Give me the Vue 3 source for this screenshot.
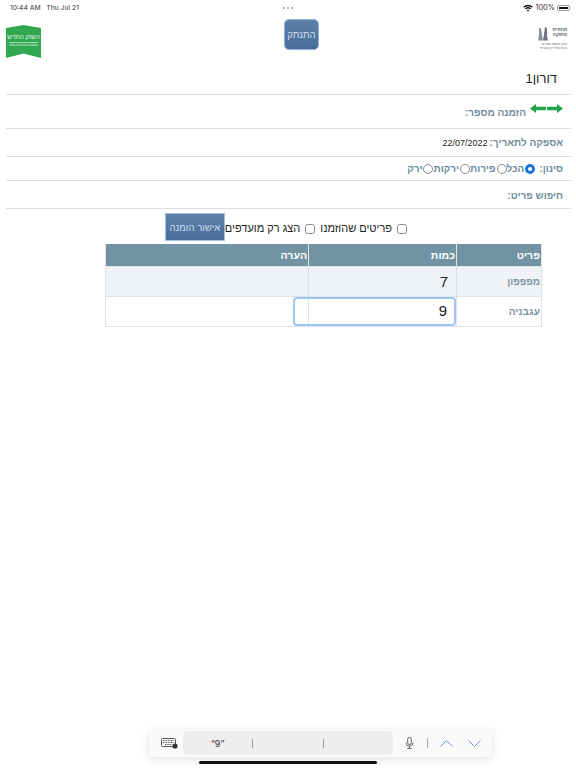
<script setup>
const rows = [
  { name: 'מפפפון', qty: '7', note: '' },
  { name: 'עגבניה', qty: '9', note: '', focused: true }
]

const filters = [
  { label: 'הכל', checked: true },
  { label: 'פירות', checked: false },
  { label: 'ירקות', checked: false },
  { label: 'ירק', checked: false }
]
</script>

<template>
  <div class="screen" dir="rtl">
    <div class="status" dir="ltr">
      <span class="status-left">10:44 AM&nbsp;&nbsp; Thu Jul 21</span>
      <span class="dots"><i></i><i></i><i></i></span>
      <span class="status-right">
        <svg width="10" height="8" viewBox="0 0 10 8">
          <path d="M0.3 2.7a6.8 6.8 0 0 1 9.4 0l-.9 1a5.4 5.4 0 0 0-7.6 0z" fill="#111" />
          <path d="M2 4.5a4.4 4.4 0 0 1 6 0l-.9 1a3 3 0 0 0-4.2 0z" fill="#111" />
          <path d="M3.7 6.2a2 2 0 0 1 2.6 0L5 7.6z" fill="#111" />
        </svg>
        <span class="percent">100%</span>
        <span class="battery"><span class="battery-fill"></span></span>
      </span>
    </div>

    <header class="top">
      <div class="logo-right">
        <svg class="logo-figure" width="12" height="17" viewBox="0 0 12 16">
          <path d="M2 1l2 1 1 7 1 5H1l1-5z" fill="#8a8f94" />
          <path d="M8 0l2 2v7l1 5H6l1-6z" fill="#70767c" />
        </svg>
        <div class="logo-right-name">תחתית<br />מתוקה</div>
        <div class="logo-right-sub">שיווק והפצת מוצרים<br />בע"מ מהדרין בכשרות</div>
      </div>
      <button class="btn btn-logout">התנתק</button>
      <div class="logo-green">
        <svg class="logo-shape" width="35" height="33" viewBox="0 0 35 33">
          <path d="M0 3 L17.5 0 L35 3 V33 L17.5 28.5 L0 33 Z" fill="#2fa84f" />
        </svg>
        <div class="logo-title">השוק החדש</div>
        <div class="logo-sub">הטעמים הטובים של הטבע</div>
      </div>
    </header>

    <div class="title-row">דורון1</div>

    <div class="row row-order">
      <span class="arrows">
        <svg width="33" height="9" viewBox="0 0 33 9">
          <path d="M0 4.5L6 0v2.7h10v3.6H6V9z" fill="#22a54a" />
          <path d="M33 4.5L27 0v2.7H17v3.6h10V9z" fill="#22a54a" />
        </svg>
      </span>
      <span class="label">הזמנה מספר:</span>
    </div>

    <div class="row row-date">
      <span class="label">אספקה לתאריך:</span>
      <span class="date" dir="ltr">22/07/2022</span>
    </div>

    <div class="row row-filter">
      <span class="label filter-label">סינון:</span>
      <label v-for="f in filters" :key="f.label" class="radio-item">
        <span class="radio" :class="{ on: f.checked }"></span>
        <span class="label">{{ f.label }}</span>
      </label>
    </div>

    <div class="row row-search">
      <span class="label">חיפוש פריט:</span>
    </div>

    <div class="options">
      <span class="box"></span>
      <span class="option-text">פריטים שהוזמנו</span>
      <span class="box"></span>
      <span class="option-text">הצג רק מועדפים</span>
      <button class="btn btn-confirm">אישור הזמנה</button>
    </div>

    <table class="grid">
      <colgroup>
        <col class="c-item" />
        <col class="c-qty" />
        <col />
      </colgroup>
      <thead>
        <tr>
          <th>פריט</th>
          <th>כמות</th>
          <th>הערה</th>
        </tr>
      </thead>
      <tbody>
        <tr v-for="(r, idx) in rows" :key="idx" :class="{ odd: idx % 2 === 0 }">
          <td class="name">{{ r.name }}</td>
          <td class="qty">
            <div class="qty-value" :class="{ focused: r.focused }">{{ r.qty }}</div>
          </td>
          <td>{{ r.note }}</td>
        </tr>
      </tbody>
    </table>

    <div class="accessory" dir="ltr">
      <svg class="kb" width="17" height="11" viewBox="0 0 17 11">
        <rect x="0.5" y="0.5" width="14" height="8" rx="1" fill="none" stroke="#555" />
        <path d="M2 2.5h11M2 4.5h11M4 6.5h7" stroke="#555" stroke-width="1" stroke-dasharray="1 .6" />
        <circle cx="14" cy="8" r="2.6" fill="#333" />
      </svg>
      <div class="suggest">
        <span class="word">“9”</span>
        <span class="sep"></span>
        <span class="word"></span>
        <span class="sep"></span>
        <span class="word"></span>
      </div>
      <svg class="mic" width="9" height="14" viewBox="0 0 10 14">
        <rect x="3" y="0.7" width="4" height="8" rx="2" fill="none" stroke="#555" />
        <path d="M1 6.5a4 4 0 0 0 8 0M5 10.5v2M2.5 13h5" fill="none" stroke="#555" />
      </svg>
      <span class="bar"></span>
      <svg class="chev" width="13" height="7" viewBox="0 0 13 7">
        <path d="M.5 6.5l6-6 6 6" fill="none" stroke="#6f8fdf" />
      </svg>
      <svg class="chev" width="13" height="7" viewBox="0 0 13 7">
        <path d="M.5 .5l6 6 6-6" fill="none" stroke="#6f8fdf" />
      </svg>
    </div>
    <div class="home"></div>
  </div>
</template>

<style>
html, body {
  margin: 0;
  background: #fff;
}
</style>

<style scoped>
.screen {
  position: relative;
  width: 576px;
  height: 768px;
  overflow: hidden;
  background: #fff;
  font-family: "Liberation Sans", Arial, sans-serif;
  color: #222;
}

.status {
  display: flex;
  justify-content: space-between;
  align-items: center;
  height: 14px;
  padding: 1px 6px 0 10px;
  box-sizing: border-box;
  font-family: Inter, sans-serif;
  font-size: 6.8px;
  color: #333;
}

.dots {
  display: flex;
  gap: 2px;
  margin-right: 26px;
}

.dots i {
  width: 2px;
  height: 2px;
  border-radius: 50%;
  background: #999;
}

.status-right {
  display: flex;
  align-items: center;
  gap: 2px;
}

.percent {
  font-size: 7.4px;
}

.battery {
  display: block;
  width: 13px;
  height: 6px;
  padding: 1px;
  border: 0.5px solid #999;
  border-radius: 2px;
  box-sizing: border-box;
}

.battery-fill {
  display: block;
  height: 100%;
  background: #111;
}

.top {
  display: flex;
  justify-content: space-between;
  align-items: flex-start;
  height: 47px;
  padding: 5px 9px 0 6px;
}

.logo-right {
  position: relative;
  width: 30px;
  height: 26px;
  margin-top: 7px;
  color: #666;
}

.logo-figure {
  position: absolute;
  top: 0;
  right: 18px;
}

.logo-right-name {
  width: 18px;
  padding-top: 1px;
  font-size: 4.6px;
  line-height: 5px;
  font-weight: bold;
  color: #555;
}

.logo-right-sub {
  margin-top: 5px;
  font-size: 3px;
  line-height: 4px;
  white-space: nowrap;
}

.btn {
  border: 1px solid #8fb0d8;
  color: #d0dfec;
  font-family: "Liberation Sans", Arial, sans-serif;
  font-size: 9.5px;
  padding: 0;
  background: linear-gradient(#5b82ab, #4a6c9a);
}

.btn-logout {
  width: 35px;
  height: 31px;
  border-radius: 5px;
  margin-left: 25px;
}

.logo-green {
  position: relative;
  width: 35px;
  height: 33px;
  margin-top: 6px;
  color: #fff;
  text-align: center;
}

.logo-shape {
  position: absolute;
  top: 0;
  left: 0;
}

.logo-title {
  position: relative;
  padding-top: 7px;
  font-size: 6.4px;
  line-height: 9px;
  white-space: nowrap;
  color: #e4f5e8;
}

.logo-sub {
  position: relative;
  margin: 1px 3px 0;
  padding-top: 1px;
  border-top: 0.5px solid #a9dfb8;
  font-size: 2.6px;
  line-height: 4px;
  white-space: nowrap;
}

.title-row {
  height: 28px;
  margin: 0 5px 0 6px;
  padding-right: 14px;
  border-bottom: 1px solid #ddd;
  font-size: 13px;
  line-height: 26px;
  color: #222;
}

.row {
  display: flex;
  align-items: center;
  margin: 0 5px 0 6px;
  border-bottom: 1px solid #ddd;
  box-sizing: border-box;
}

.label {
  color: #6e8c9c;
  font-size: 10px;
  font-weight: bold;
}

.row-order {
  height: 34px;
  padding-right: 8px;
  align-items: flex-start;
}

.row-order .arrows {
  padding-top: 9px;
  margin-left: 4px;
}

.row-order .label {
  padding-top: 12px;
}

.arrows {
  display: block;
  line-height: 0;
}

.row-date {
  height: 28px;
  padding-right: 8px;
  gap: 2px;
}

.date {
  font-size: 9px;
  color: #222;
}

.row-filter {
  height: 24px;
  padding-right: 8px;
}

.filter-label {
  margin-left: 4px;
}

.radio-item {
  display: flex;
  align-items: center;
  gap: 1px;
}

.radio {
  display: block;
  width: 10px;
  height: 10px;
  border: 1px solid #8a8a8a;
  border-radius: 50%;
  box-sizing: border-box;
}

.radio.on {
  border: 3px solid #1a73e0;
  background: #fff;
}

.row-search {
  height: 28px;
  padding-right: 8px;
}

.row-search .label {
  padding-top: 2px;
}

.options {
  display: flex;
  align-items: center;
  height: 34px;
  padding-top: 2px;
  padding-right: 169px;
  gap: 5px;
  box-sizing: border-box;
  font-size: 11px;
  color: #222;
}

.box {
  display: block;
  width: 10px;
  height: 10px;
  border: 1px solid #8a8a8a;
  border-radius: 2.5px;
  box-sizing: border-box;
  margin-top: 4px;
}

.option-text {
  margin-top: 2px;
}

.btn-confirm {
  width: 60px;
  height: 28px;
  margin-right: -5px;
  border: 1px solid #a6bfe0;
}

.grid {
  width: 437px;
  margin-right: 34px;
  margin-top: 1px;
  border-collapse: collapse;
  table-layout: fixed;
}

.c-item {
  width: 85px;
}

.c-qty {
  width: 148px;
}

.grid th {
  height: 22px;
  padding: 0 1px 0 0;
  background: #7193a3;
  color: #fff;
  font-size: 10.5px;
  font-weight: bold;
  text-align: right;
  border: 1px solid #dfe6ea;
  border-top: none;
}

.grid td {
  height: 29px;
  padding: 0;
  border: 1px solid #e0e3e5;
  font-size: 10px;
}

.grid tr.odd td {
  background: #eff3f5;
}

.name {
  padding-right: 1px !important;
  color: #7a96a4;
  font-weight: bold;
}

.qty {
  position: relative;
}

.qty-value {
  font-size: 15px;
  color: #222;
  text-align: right;
  padding-right: 8px;
  line-height: 26px;
}

.qty-value.focused {
  width: 152px;
  padding-right: 7px;
  height: 25px;
  border: 2px solid #9cc6f3;
  border-radius: 4px;
  line-height: 24px;
}

.accessory {
  position: absolute;
  left: 149px;
  top: 729px;
  width: 343px;
  height: 28px;
  display: flex;
  align-items: center;
  box-sizing: border-box;
  padding-left: 12px;
  background: #fafafa;
  border-radius: 5px;
  box-shadow: 0 2px 10px rgba(0, 0, 0, 0.12);
}

.suggest {
  display: flex;
  align-items: center;
  width: 210px;
  height: 24px;
  margin-left: 5px;
  background: #eeeeee;
  border-radius: 5px;
  font-family: Inter, sans-serif;
  font-size: 9px;
  color: #333;
}

.word {
  flex: 1;
  text-align: center;
}

.sep {
  width: 1px;
  height: 9px;
  background: #999;
}

.mic {
  margin-left: 12px;
}

.bar {
  width: 1px;
  height: 10px;
  margin-left: 13px;
  background: #aaa;
}

.chev {
  margin-left: 12px;
}

.chev:last-child {
  margin-left: 15px;
}

.home {
  position: absolute;
  left: 199px;
  top: 761px;
  width: 178px;
  height: 3px;
  border-radius: 2px;
  background: #111;
}
</style>
